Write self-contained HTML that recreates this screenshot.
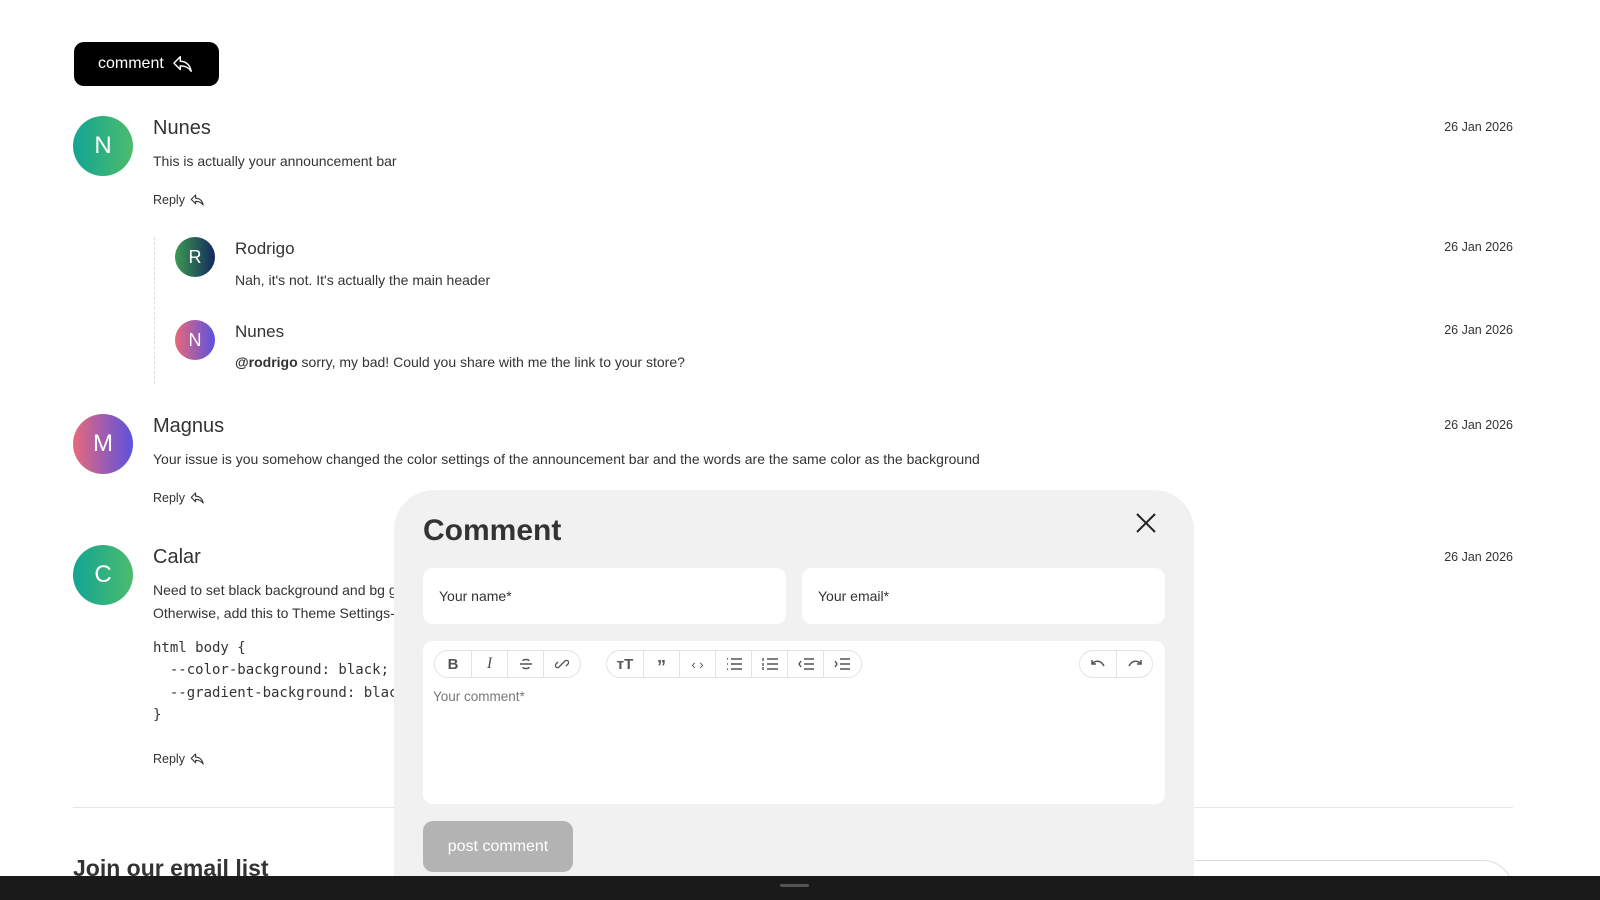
<!DOCTYPE html>
<html><head><meta charset="utf-8">
<style>
*{box-sizing:border-box;margin:0;padding:0}
html{width:1600px;height:900px;overflow:hidden}
body{width:1600px;height:900px;overflow:hidden;background:#fff;font-family:"Liberation Sans",sans-serif;color:#333;position:relative}
.a{position:absolute}
.av{position:absolute;border-radius:50%;color:#fff;display:flex;align-items:center;justify-content:center}
.g1{background:linear-gradient(90deg,#12a594,#4dbb6c)}
.g2{background:linear-gradient(90deg,#3d9a52,#14285e)}
.g3{background:linear-gradient(90deg,#e8697a,#5a52e0)}
.nm{position:absolute;font-size:20px;color:#333;line-height:1}
.nm2{position:absolute;font-size:17px;color:#333;line-height:1}
.tx{position:absolute;font-size:14px;color:#333;line-height:1;white-space:nowrap}
.dt{position:absolute;right:87px;font-size:12.5px;color:#333;line-height:1}
.rp{position:absolute;font-size:12.5px;color:#333;line-height:1;display:flex;align-items:center;gap:5px}
.code{position:absolute;left:153px;font-family:"DejaVu Sans Mono",monospace;font-size:14px;line-height:22.4px;color:#333;white-space:pre}
.tb{position:absolute;top:650px;height:28px;border:1px solid #e2e2e2;border-radius:14px;display:flex;background:#fff}
.tb span{width:36px;display:flex;align-items:center;justify-content:center;border-left:1px solid #e2e2e2}
.tb span:first-child{border-left:none}
</style></head><body>
<div class="a" style="left:74px;top:42px;width:145px;height:44px;background:#000;border-radius:10px;color:#fff;font-size:16px;display:flex;align-items:center;padding-left:24px;gap:8px">comment
<svg width="22" height="20" viewBox="0 0 24 22" fill="none" stroke="#fff" stroke-width="1.6" stroke-linejoin="round"><path d="M9 3L2 10l7 7v-4c5 0 9 1.5 12 6-1-6-5-11-12-11V3z"/></svg></div>

<div class="av g1" style="left:73px;top:116px;width:60px;height:60px;font-size:24px">N</div>
<div class="nm" style="left:153px;top:118px">Nunes</div>
<div class="dt" style="top:121px">26 Jan 2026</div>
<div class="tx" style="left:153px;top:154px">This is actually your announcement bar</div>
<div class="rp" style="left:153px;top:193px">Reply <svg width="15" height="14" viewBox="0 0 24 22" fill="none" stroke="#333" stroke-width="1.8" stroke-linejoin="round"><path d="M9 3L2 10l7 7v-4c5 0 9 1.5 12 6-1-6-5-11-12-11V3z"/></svg></div>

<div class="a" style="left:154px;top:237px;height:147px;border-left:1px dashed #ddd"></div>
<div class="av g2" style="left:175px;top:237px;width:40px;height:40px;font-size:18px">R</div>
<div class="nm2" style="left:235px;top:240px">Rodrigo</div>
<div class="dt" style="top:241px">26 Jan 2026</div>
<div class="tx" style="left:235px;top:273px">Nah, it's not. It's actually the main header</div>
<div class="av g3" style="left:175px;top:320px;width:40px;height:40px;font-size:18px">N</div>
<div class="nm2" style="left:235px;top:323px">Nunes</div>
<div class="dt" style="top:324px">26 Jan 2026</div>
<div class="tx" style="left:235px;top:355px"><b>@rodrigo</b> sorry, my bad! Could you share with me the link to your store?</div>

<div class="av g3" style="left:73px;top:414px;width:60px;height:60px;font-size:24px">M</div>
<div class="nm" style="left:153px;top:416px">Magnus</div>
<div class="dt" style="top:419px">26 Jan 2026</div>
<div class="tx" style="left:153px;top:452px">Your issue is you somehow changed the color settings of the announcement bar and the words are the same color as the background</div>
<div class="rp" style="left:153px;top:491px">Reply <svg width="15" height="14" viewBox="0 0 24 22" fill="none" stroke="#333" stroke-width="1.8" stroke-linejoin="round"><path d="M9 3L2 10l7 7v-4c5 0 9 1.5 12 6-1-6-5-11-12-11V3z"/></svg></div>

<div class="av g1" style="left:73px;top:545px;width:60px;height:60px;font-size:24px">C</div>
<div class="nm" style="left:153px;top:547px">Calar</div>
<div class="dt" style="top:551px">26 Jan 2026</div>
<div class="tx" style="left:153px;top:583px">Need to set black background and bg gradient</div>
<div class="tx" style="left:153px;top:606px">Otherwise, add this to Theme Settings-</div>
<div class="code" style="top:637px">html body {
  --color-background: black;
  --gradient-background: black;
}</div>
<div class="rp" style="left:153px;top:752px">Reply <svg width="15" height="14" viewBox="0 0 24 22" fill="none" stroke="#333" stroke-width="1.8" stroke-linejoin="round"><path d="M9 3L2 10l7 7v-4c5 0 9 1.5 12 6-1-6-5-11-12-11V3z"/></svg></div>

<div class="a" style="left:73px;top:807px;width:1440px;border-top:1px solid #e6e6e6"></div>
<div class="a" style="left:73px;top:855px;font-size:23px;font-weight:bold;color:#333">Join our email list</div>
<div class="a" style="left:1150px;top:860px;width:363px;height:40px;border:1px solid #ddd;border-bottom:none;border-radius:30px 30px 0 0"></div>

<div class="a" style="left:394px;top:490px;width:800px;height:410px;background:#f1f1f1;border-radius:40px 40px 0 0">
  <div class="a" style="left:29px;top:24px;font-size:30px;font-weight:bold;color:#333">Comment</div>
  <svg class="a" style="left:741px;top:22px" width="22" height="22" viewBox="0 0 22 22" stroke="#222" stroke-width="2"><path d="M2 2L20 20M20 2L2 20"/></svg>
  <div class="a" style="left:29px;top:78px;width:363px;height:56px;background:#fff;border-radius:10px;font-size:14px;padding:20px 16px;color:#333">Your name*</div>
  <div class="a" style="left:408px;top:78px;width:363px;height:56px;background:#fff;border-radius:10px;font-size:14px;padding:20px 16px;color:#333">Your email*</div>
  <div class="a" style="left:29px;top:151px;width:742px;height:163px;background:#fff;border-radius:10px">
    <div class="a" style="left:10px;top:48px;font-size:13.5px;color:#777">Your comment*</div>
  </div>
  <div class="a" style="left:29px;top:331px;width:150px;height:51px;background:#b3b3b3;border-radius:10px;color:#fff;font-size:16px;display:flex;align-items:center;justify-content:center">post comment</div>
</div>

<div class="tb" style="left:434px;width:147px">
 <span style="font-weight:bold;font-size:15px;color:#555">B</span>
 <span style="font-style:italic;font-family:'Liberation Serif',serif;font-size:16px;color:#555">I</span>
 <span><svg width="14" height="14" viewBox="0 0 14 14" fill="none" stroke="#555" stroke-width="1.5"><path d="M1 7h12M10 4c0-2-6-2-6 0M4 10c0 2 6 2 6 0"/></svg></span>
 <span><svg width="14" height="14" viewBox="0 0 14 14" fill="none" stroke="#555" stroke-width="1.3"><path d="M6 8l-2 2a2 2 0 01-3-3l2-2M8 6l2-2a2 2 0 013 3l-2 2M5 9l4-4"/></svg></span>
</div>
<div class="tb" style="left:606px;width:256px">
 <span style="font-weight:bold;font-size:15px;color:#555">тT</span>
 <span style="font-weight:bold;font-size:18px;color:#555;padding-top:6px">”</span>
 <span style="font-size:13px;color:#555">‹ ›</span>
 <span><svg width="16" height="12" viewBox="0 0 16 12" stroke="#555" stroke-width="1.4"><path d="M5 1h11M5 6h11M5 11h11M1 1h1M1 6h1M1 11h1"/></svg></span>
 <span><svg width="16" height="12" viewBox="0 0 16 12" stroke="#555" stroke-width="1.4"><path d="M5 1h11M5 6h11M5 11h11M1 0v3M1 5v3M1 9v3"/></svg></span>
 <span><svg width="16" height="12" viewBox="0 0 16 12" fill="none" stroke="#555" stroke-width="1.4"><path d="M6 1h10M6 6h10M6 11h10M3 3L1 6l2 3"/></svg></span>
 <span><svg width="16" height="12" viewBox="0 0 16 12" fill="none" stroke="#555" stroke-width="1.4"><path d="M6 1h10M6 6h10M6 11h10M1 3l2 3-2 3"/></svg></span>
</div>
<div class="tb" style="left:1079px;width:74px">
 <span><svg width="16" height="12" viewBox="0 0 16 12" fill="none" stroke="#555" stroke-width="1.5"><path d="M2 2v4h4M2 6c3-4 9-4 12 2"/></svg></span>
 <span><svg width="16" height="12" viewBox="0 0 16 12" fill="none" stroke="#555" stroke-width="1.5"><path d="M14 2v4h-4M14 6c-3-4-9-4-12 2"/></svg></span>
</div>

<div class="a" style="left:0;top:876px;width:1600px;height:24px;background:#1a1a1a"></div>
<div class="a" style="left:780px;top:884px;width:29px;height:3px;background:#555;border-radius:2px"></div>
</body></html>
